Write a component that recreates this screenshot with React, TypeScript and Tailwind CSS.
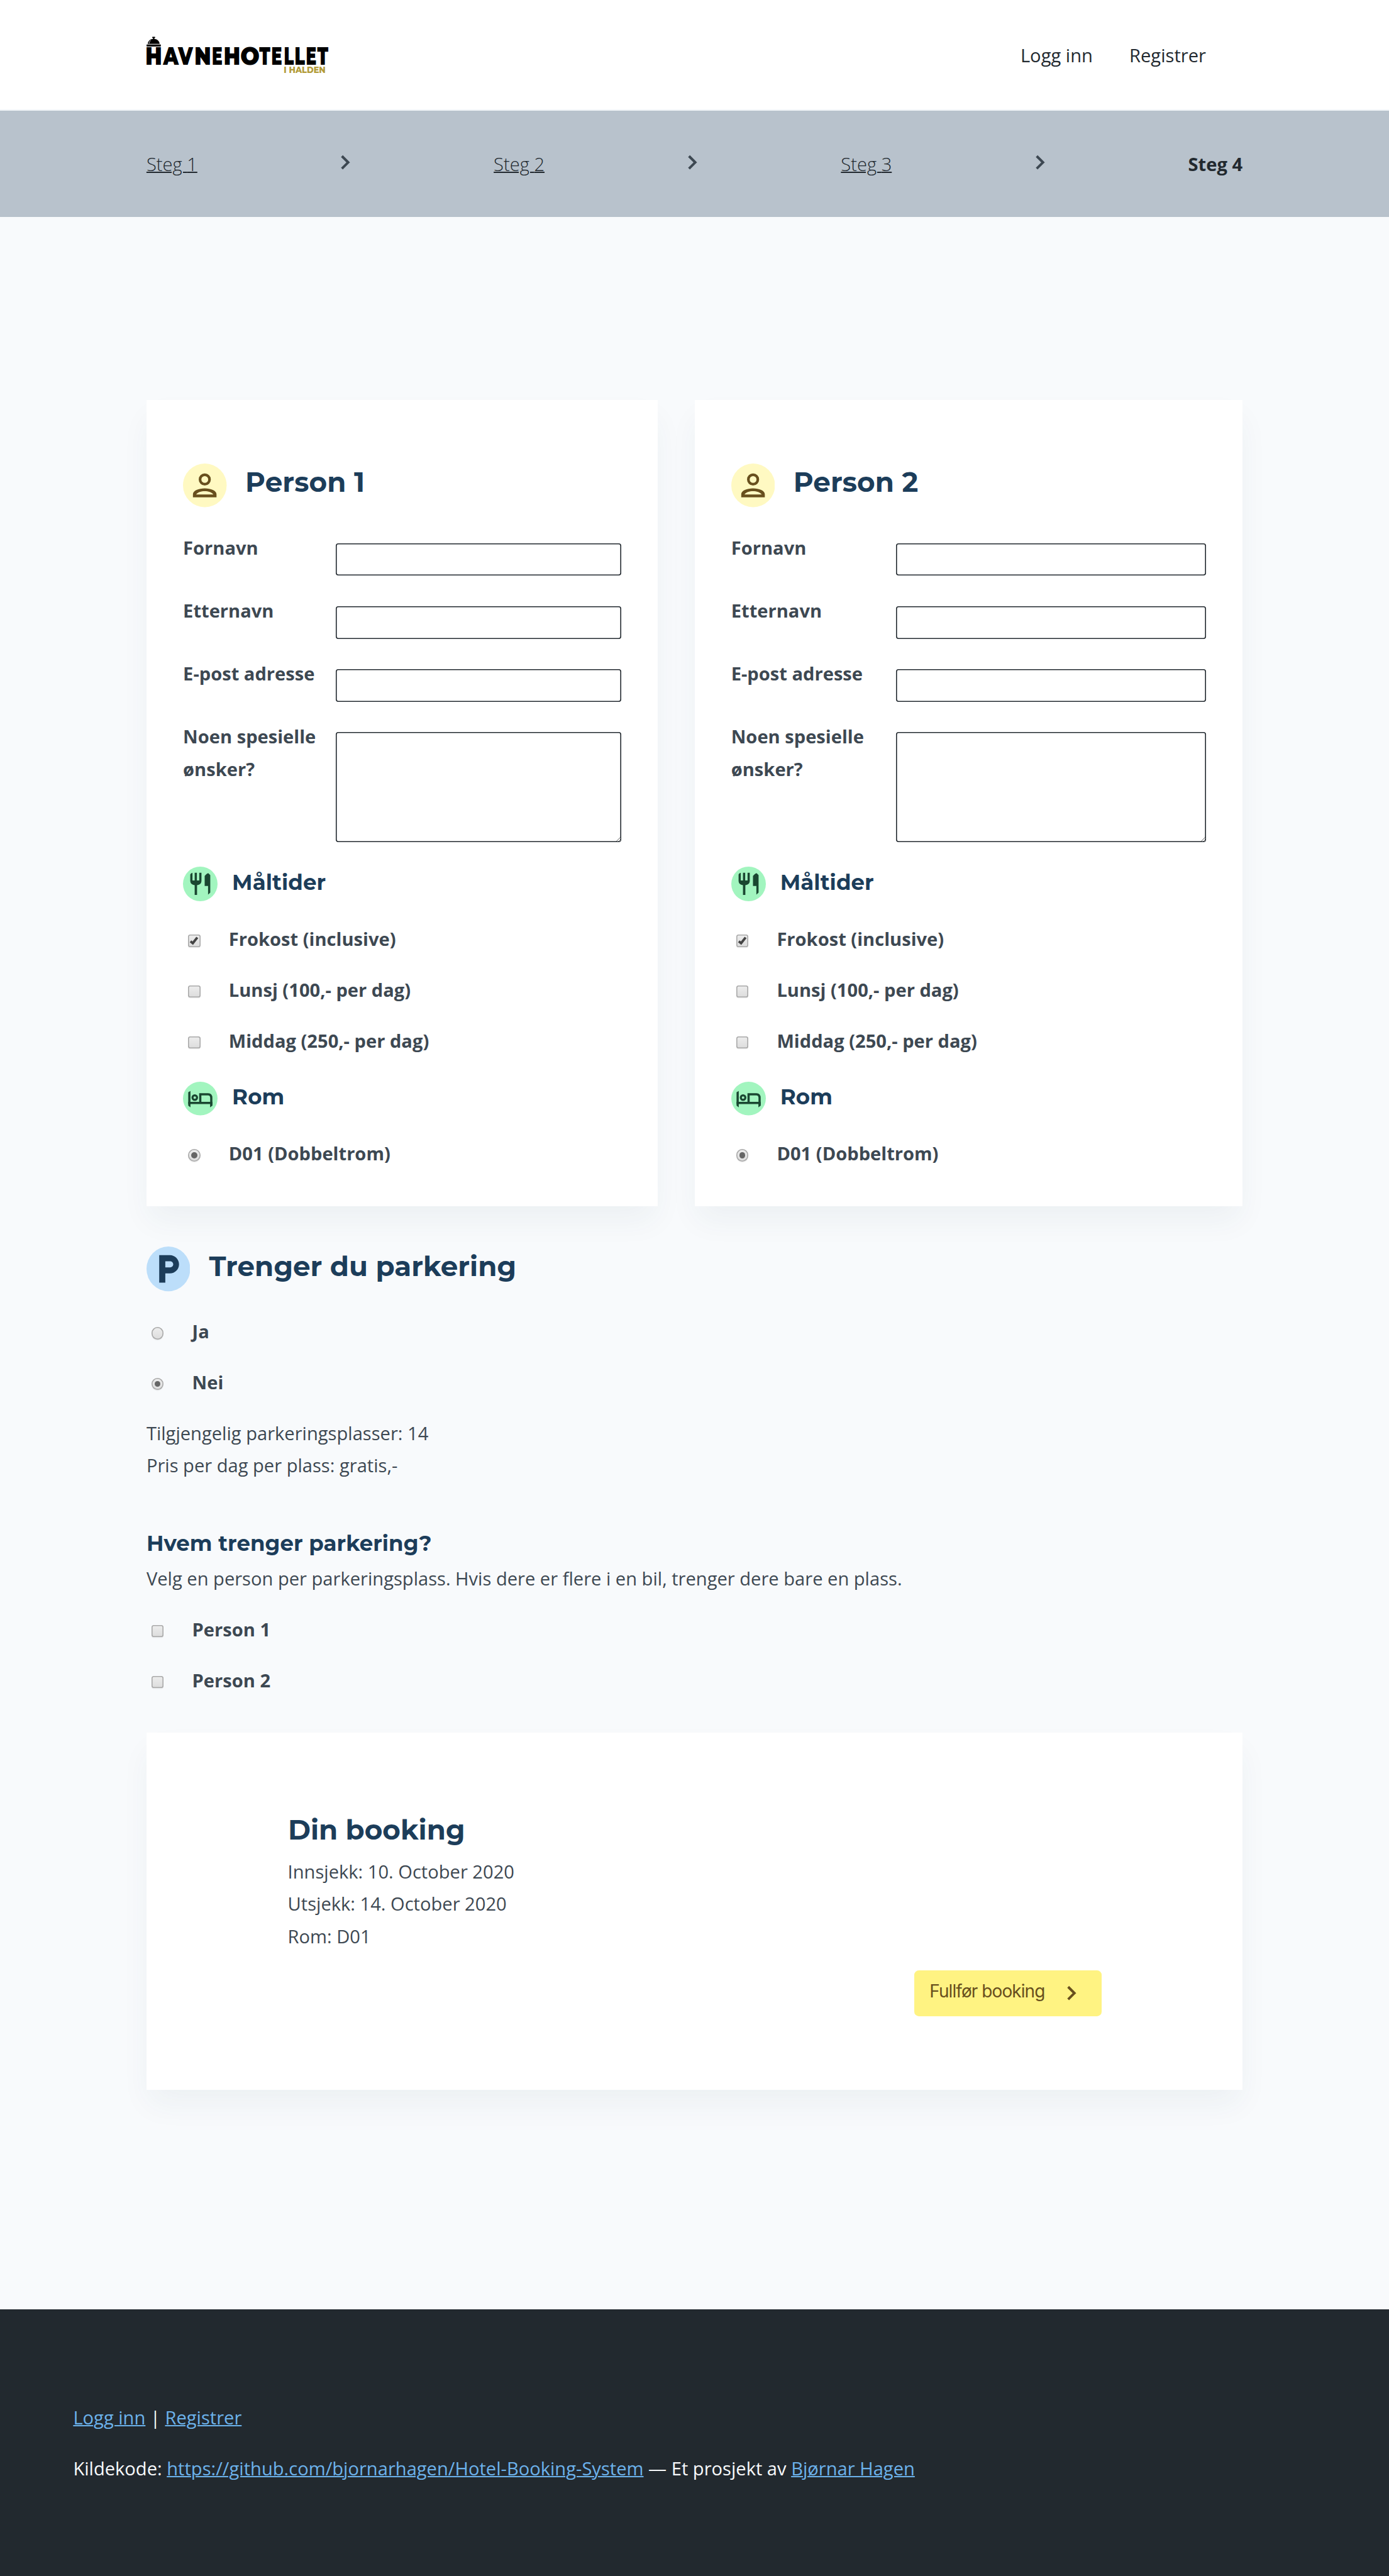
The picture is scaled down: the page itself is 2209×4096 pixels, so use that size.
import React from 'react';

function Chevron({ className }: { className: string }) {
  return (
    <svg viewBox="0 0 20 20" className={className} fill="currentColor">
      <path d="M12.95 10.707l.707-.707L8 4.343 6.586 5.757 10.828 10l-4.242 4.243L8 15.657l4.95-4.95z" />
    </svg>
  );
}

// Letter, left edge and width inside the logo
const LETTERS: [string, number, number][] = [
  ['H', 84, 84],
  ['A', 180, 96],
  ['V', 268, 92],
  ['N', 373, 84],
  ['E', 475, 54],
  ['H', 546, 84],
  ['O', 641, 107],
  ['T', 750, 65],
  ['E', 826, 55],
  ['L', 900, 53],
  ['L', 963, 55],
  ['E', 1030, 54],
  ['T', 1092, 65],
];

// Left bearing and ink width of each capital, in em
const INK: Record<string, [number, number]> = {
  H: [0.055, 0.69],
  A: [-0.018, 0.85],
  V: [-0.02, 0.83],
  N: [0.055, 0.69],
  E: [0.055, 0.585],
  O: [0.028, 0.8],
  T: [0.006, 0.65],
  L: [0.055, 0.555],
};

const CAP_SIZE = 144;

function Logo() {
  return (
    <svg viewBox="84 64 1074 222" className="block w-[289.5px] h-[59.8px] overflow-visible">
      <rect x="117" y="66" width="18" height="7" rx="3" />
      <rect x="122" y="70" width="8" height="10" />
      <path d="M91 108C92 90 107 78 126 78S160 90 161 108Z" />
      <path d="M99 105C100 97 103 91 109 87" stroke="#fff" strokeWidth="3" fill="none" />
      <rect x="84" y="111" width="84" height="12" rx="2" />
      {LETTERS.map(([ch, x, w], i) => {
        const [bearing, ink] = INK[ch];
        const k = w / (ink * CAP_SIZE);
        return (
          <text
            key={i}
            transform={`translate(${x - bearing * CAP_SIZE * k} 231) scale(${k} 1)`}
            fontFamily="Montserrat, Inter, sans-serif"
            fontWeight={900}
            fontSize={CAP_SIZE}
          >
            {ch}
          </text>
        );
      })}
      <text
        x="894"
        y="279"
        textLength="247"
        lengthAdjust="spacingAndGlyphs"
        fontFamily="Montserrat, Inter, sans-serif"
        fontWeight={800}
        fontSize="52"
        fill="#b29b38"
      >
        I HALDEN
      </text>
    </svg>
  );
}

function PersonIcon() {
  return (
    <svg viewBox="0 0 86 86" className="w-[69.5px] h-[69.5px] shrink-0">
      <circle cx="43" cy="43" r="43" fill="#fff9c2" />
      <circle cx="42.9" cy="31.4" r="9.3" fill="none" stroke="#684f1d" strokeWidth="5.2" />
      <path
        fill="#684f1d"
        fillRule="evenodd"
        d="M19.6 66.6V60.5C19.6 53 31 48.8 42.8 48.8S66 53 66 60.5V66.6ZM26 61H59.8C57 56.6 49.5 54.4 42.8 54.4S28.600 56.6 26 61Z"
      />
    </svg>
  );
}

function FoodIcon() {
  return (
    <svg viewBox="30 42 204 204" className="w-[55px] h-[55px] shrink-0">
      <circle cx="132" cy="144" r="102" fill="#a2f5bf" />
      <g fill="#1a4731">
        <path d="M73 88Q76 80 86 78V124H99V78H112V124H126V78H139V128Q137 148 113 151V209H99V151Q75 148 73 128Z" />
        <path d="M158 97L167 87Q174 80 180 81L191 92V195L178 207V156H158Z" />
      </g>
    </svg>
  );
}

function BedIcon() {
  return (
    <svg viewBox="30 35 204 199" className="w-[55px] h-[53.6px] shrink-0">
      <ellipse cx="132" cy="134.5" rx="102" ry="99.5" fill="#a2f5bf" />
      <g fill="none" stroke="#1a4731" strokeWidth="13">
        <circle cx="99.5" cy="129" r="13.5" strokeWidth="12" />
        <path d="M132 159V109H178Q197 110 197 130V159" />
        <path d="M61 160H204" />
      </g>
      <path fill="#1a4731" d="M74 90L61 97V176L74 186ZM190 160H204V176L190 186Z" />
    </svg>
  );
}

function ParkingIcon() {
  return (
    <svg viewBox="0 0 86 88" className="w-[69.5px] h-[71.2px] shrink-0">
      <ellipse cx="43" cy="44" rx="43" ry="44" fill="#bcdefa" />
      <path
        transform="translate(7 8) scale(3)"
        fill="#1c3d5a"
        d="M13 3H6v18h4v-6h3c3.310 0 6-2.690 6-6s-2.690-6-6-6zm.2 8H10V7h3.200c1.100 0 2 .9 2 2s-.9 2-2 2z"
      />
    </svg>
  );
}

function Toggle({ kind, checked }: { kind: 'checkbox' | 'radio'; checked?: boolean }) {
  const round = kind === 'radio';
  return (
    <span
      role={kind}
      aria-checked={!!checked}
      className={
        'mt-[19.4px] ml-[8.1px] w-[19.4px] h-[19.4px] shrink-0 flex items-center justify-center bg-gradient-to-b from-[#eeeeee] to-[#dcdcdc] shadow-[inset_0_0_0_1.6px_#a9a9a9,0_1.6px_0_0_rgba(0,0,0,0.06)] ' +
        (round ? 'rounded-full' : 'rounded-[3.5px]')
      }
    >
      {checked && round && <span className="block w-[9.3px] h-[9.3px] rounded-full bg-[#666]" />}
      {checked && !round && (
        <svg viewBox="0 0 24 24" className="w-[19.4px] h-[19.4px]">
          <path d="M4.9 13.4L9.4 17L18.3 5.7" fill="none" stroke="#444" strokeWidth="4.8" />
        </svg>
      )}
    </span>
  );
}

function Option({ kind, checked, label }: { kind: 'checkbox' | 'radio'; checked?: boolean; label: string }) {
  return (
    <div className="flex h-[80.86px]">
      <Toggle kind={kind} checked={checked} />
      <span className="ml-[45.2px] mt-[1.4px] font-bold">{label}</span>
    </div>
  );
}

const HEAD = "font-['Montserrat','Inter',sans-serif] font-bold text-[#1c3d5a] whitespace-nowrap ";

function SubHeading({ icon, text, offset }: { icon: React.ReactNode; text: string; offset: string }) {
  return (
    <div className="flex mb-[34px]">
      {icon}
      <h3 className={HEAD + 'ml-[23px] text-[34px] leading-[42px] tracking-[0.1px] ' + offset}>{text}</h3>
    </div>
  );
}

const BOX = 'block w-full bg-white rounded-[4px] border-0 outline-0 shadow-[inset_0_0_0_1.6px_#22292f] ';

const CARD_SHADOW = 'shadow-[0_26px_46px_-4px_rgba(28,70,100,0.055)] ';

function PersonCard({ n, width, labelWidth }: { n: number; width: string; labelWidth: string }) {
  return (
    <section className={'bg-white px-[58.2px] pt-[101.9px] pb-[29.1px] ' + CARD_SHADOW + width}>
      <div className="flex mb-[37.2px]">
        <PersonIcon />
        <h2 className={HEAD + 'ml-[29.5px] mt-[1.6px] text-[43.66px] leading-[55px] tracking-[0.1px]'}>Person {n}</h2>
      </div>
      {['Fornavn', 'Etternavn', 'E-post adresse'].map((label) => (
        <div key={label} className="flex h-[100.26px]">
          <label className={'font-bold shrink-0 pt-[1.4px] ' + labelWidth}>{label}</label>
          <div className="grow pt-[19.4px]">
            <input className={BOX + 'h-[51.8px]'} />
          </div>
        </div>
      ))}
      <div className="flex h-[232.9px]">
        <label className={'font-bold shrink-0 pt-[1.4px] ' + labelWidth}>Noen spesielle ønsker?</label>
        <div className="grow pt-[19.4px]">
          <textarea className={BOX + 'h-[174.6px] resize'} />
        </div>
      </div>
      <SubHeading icon={<FoodIcon />} text="Måltider" offset="mt-[4px]" />
      <Option kind="checkbox" checked label="Frokost (inclusive)" />
      <Option kind="checkbox" label="Lunsj (100,- per dag)" />
      <Option kind="checkbox" label="Middag (250,- per dag)" />
      <div className="h-[10.8px]" />
      <SubHeading icon={<BedIcon />} text="Rom" offset="mt-[2.6px]" />
      <Option kind="radio" checked label="D01 (Dobbeltrom)" />
    </section>
  );
}

const LINK = 'text-[#6cb2eb] underline decoration-[1.6px]';

export default function App() {
  return (
    <div className="w-[2209px] h-[4096px] overflow-hidden flex flex-col bg-[#f8fafc] text-[#3d4852] font-['Open_Sans',sans-serif] text-[29.11px] leading-[51.75px]">
      <header className="h-[176px] shrink-0 bg-white border-b-2 border-[#f1f5f8] text-[#22292f] flex justify-between pl-[232.9px] pr-[291.1px]">
        <div className="pt-[58px]">
          <Logo />
        </div>
        <nav className="flex gap-[58.2px] pt-[62.6px]">
          <a>Logg inn</a>
          <a>Registrer</a>
        </nav>
      </header>

      <nav className="h-[168.5px] shrink-0 bg-[#b8c2cc] px-[232.9px] pt-[59.7px] flex justify-between text-[#22292f]">
        {[1, 2, 3].map((n) => (
          <React.Fragment key={n}>
            <a className="font-light underline decoration-[1.6px]">Steg {n}</a>
            <Chevron className="w-[40.4px] h-[40.4px] mt-[2.2px] text-[#3d4852]" />
          </React.Fragment>
        ))}
        <span className="font-bold">Steg 4</span>
      </nav>

      <main className="px-[232.9px] pt-[291.1px] grow">
        <div className="flex justify-between">
          <PersonCard n={1} width="w-[813.4px]" labelWidth="w-[242.6px]" />
          <PersonCard n={2} width="w-[871.6px]" labelWidth="w-[262px]" />
        </div>

        <section className="pt-[64.7px]">
          <div className="flex mb-[37.2px]">
            <ParkingIcon />
            <h2 className={HEAD + 'ml-[30px] mt-[3.6px] text-[43.66px] leading-[55px] tracking-[0.05px]'}>
              Trenger du parkering
            </h2>
          </div>
          <Option kind="radio" label="Ja" />
          <Option kind="radio" checked label="Nei" />
          <p className="mt-[1.2px]">Tilgjengelig parkeringsplasser: 14</p>
          <p>Pris per dag per plass: gratis,-</p>
          <h3 className={HEAD + 'mt-[75.6px] mb-[10.1px] text-[34px] leading-[42px] tracking-[0.05px]'}>
            Hvem trenger parkering?
          </h3>
          <p className="mb-[27.9px]">
            Velg en person per parkeringsplass. Hvis dere er flere i en bil, trenger dere bare en plass.
          </p>
          <Option kind="checkbox" label="Person 1" />
          <Option kind="checkbox" label="Person 2" />
        </section>

        <section className={'mt-[29.1px] h-[567.6px] bg-white px-[224.2px] pt-[127px] ' + CARD_SHADOW}>
          <h2 className={HEAD + 'ml-[0.8px] text-[43.66px] leading-[55px] mb-[13.5px]'}>Din booking</h2>
          <div className="ml-[0.5px] leading-[51.4px]">
            <p>Innsjekk: 10. October 2020</p>
            <p>Utsjekk: 14. October 2020</p>
            <p>Rom: D01</p>
          </div>
          <button className="mt-[28.2px] ml-auto flex w-[297.6px] h-[72.8px] rounded-[7.3px] bg-[#fff382] text-[#684f1d] pl-[24px] font-['Inter',sans-serif] text-[28px] leading-[66.6px] tracking-[-0.93px] whitespace-nowrap">
            <span className="grow text-left">Fullfør booking</span>
            <Chevron className="w-[40.4px] h-[40.4px] mt-[16.2px] mr-[28px]" />
          </button>
        </section>
      </main>

      <footer className="h-[423.7px] shrink-0 bg-[#22292f] text-[#f8fafc] px-[116.4px] pt-[146.9px]">
        <p className="mb-[29.1px]">
          <a className={LINK}>Logg inn</a> | <a className={LINK}>Registrer</a>
        </p>
        <p>
          Kildekode: <a className={LINK}>https://github.com/bjornarhagen/Hotel-Booking-System</a> — Et prosjekt av{' '}
          <a className={LINK}>Bjørnar Hagen</a>
        </p>
      </footer>
    </div>
  );
}
